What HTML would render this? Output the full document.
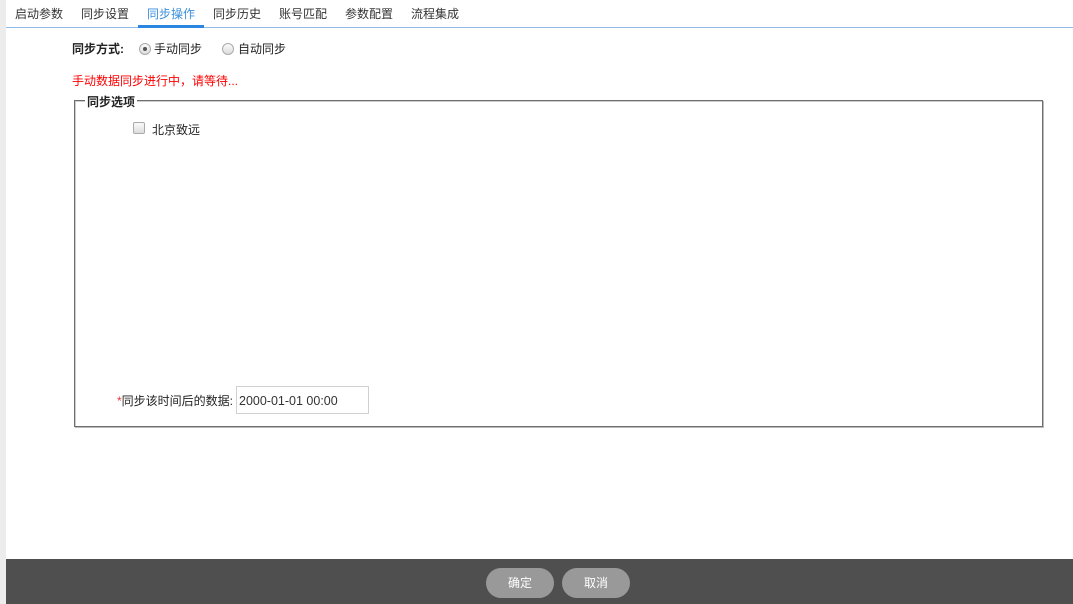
<!DOCTYPE html>
<html><head><meta charset="utf-8"><style>
*{margin:0;padding:0;box-sizing:border-box}
body{width:1073px;height:604px;position:relative;overflow:hidden;background:#fff;font-family:"Liberation Sans","Noto Sans CJK SC",sans-serif;font-size:12px;color:#222}
.strip{position:absolute;left:0;top:0;width:6px;height:604px;background:#ececec}
.tabs{position:absolute;left:6px;top:0;right:0;height:28px;border-bottom:1px solid #8fbce8}
.tab{position:absolute;top:5px;font-size:12px;color:#333}
.tab.act{color:#3b8fdc}
.ul{position:absolute;left:138px;top:25px;width:66px;height:3px;background:#2b86e0}
.abs{position:absolute;white-space:nowrap}
.radio{position:absolute;width:12px;height:12px;border-radius:50%;border:1px solid #aaa;background:linear-gradient(#fafafa,#ddd)}
.radio.on::after{content:"";position:absolute;left:3px;top:3px;width:4px;height:4px;border-radius:50%;background:#555}
.fs{position:absolute;left:74px;top:100px;width:969px;height:327px;border:1px solid #6e6e6e;box-shadow:inset 1px 1px 0 #ccc,1px 1px 0 #bbb}
.legend{position:absolute;left:85px;top:93px;background:#fff;padding:0 2px;font-weight:bold;font-size:12px}
.cb{position:absolute;left:133px;top:122px;width:12px;height:12px;border:1px solid #aaa;border-radius:2px;background:linear-gradient(#fafafa,#ddd)}
.inp{position:absolute;left:236px;top:386px;width:133px;height:28px;border:1px solid #d0d0d0;padding:7px 2px;font-size:12.5px;color:#333}
.foot{position:absolute;left:6px;top:559px;right:0;height:45px;background:#4f4f4f}
.btn{position:absolute;top:568px;width:68px;height:30px;border-radius:15px;background:#999;color:#fff;font-size:12px;text-align:center;line-height:30px}
</style></head><body>
<div class="strip"></div>
<div class="tabs"></div>
<span class="tab" style="left:15px">启动参数</span>
<span class="tab" style="left:81px">同步设置</span>
<span class="tab act" style="left:147px">同步操作</span>
<span class="tab" style="left:213px">同步历史</span>
<span class="tab" style="left:279px">账号匹配</span>
<span class="tab" style="left:345px">参数配置</span>
<span class="tab" style="left:411px">流程集成</span>
<div class="ul"></div>
<span class="abs" style="left:72px;top:40px;font-weight:bold">同步方式:</span>
<div class="radio on" style="left:139px;top:43px"></div>
<span class="abs" style="left:154px;top:40px">手动同步</span>
<div class="radio" style="left:222px;top:43px"></div>
<span class="abs" style="left:238px;top:40px">自动同步</span>
<span class="abs" style="left:72px;top:72px;color:#f00">手动数据同步进行中，请等待...</span>
<div class="fs"></div>
<span class="legend">同步选项</span>
<div class="cb"></div>
<span class="abs" style="left:152px;top:121px">北京致远</span>
<span class="abs" style="left:117px;top:392px"><span style="color:#e33">*</span>同步该时间后的数据:</span>
<div class="inp">2000-01-01 00:00</div>
<div class="foot"></div>
<div class="btn" style="left:486px">确定</div>
<div class="btn" style="left:562px">取消</div>
</body></html>
